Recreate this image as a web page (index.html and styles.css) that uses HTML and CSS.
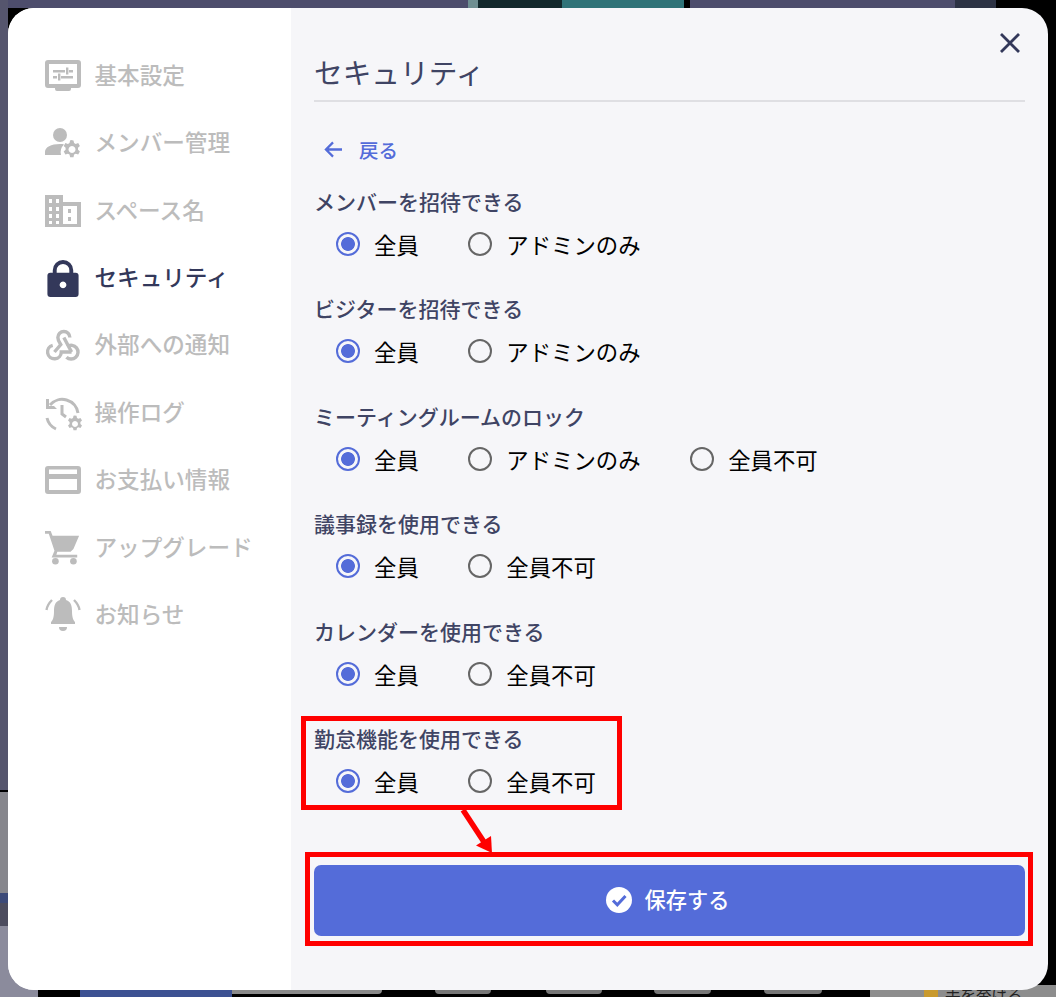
FILE: index.html
```html
<!DOCTYPE html>
<html lang="ja">
<head>
<meta charset="utf-8">
<title>セキュリティ</title>
<link rel="stylesheet" href="styles.css">
</head>
<body>
<div class="backdrop">
  <div class="bg bg-top-a"></div><div class="bg bg-top-a2"></div><div class="bg bg-top-b"></div><div class="bg bg-top-c"></div><div class="bg bg-top-d"></div><div class="bg bg-top-e"></div>
  <div class="bg bg-left"></div><div class="bg bg-left-2"></div><div class="bg bg-left-3"></div><div class="bg bg-left-4"></div><div class="bg bg-left-low"></div>
  <div class="bg bg-bottom-a"></div><div class="bg bg-bottom-b"></div>
  <div class="bg hump hump-1"></div><div class="bg hump hump-2"></div><div class="bg hump hump-3"></div><div class="bg hump hump-4"></div>
  <div class="bg bg-right-low"></div><div class="bg bg-hand"></div>
  <span class="bg bg-hint">手を挙げる</span>
</div>
<main class="modal">
  <nav class="side">
    <a class="nav-item"><svg class="nav-icon" viewBox="0 0 36 32"><path fill-rule="evenodd" d="M3 0h30a3 3 0 0 1 3 3v22a3 3 0 0 1-3 3h-7v1a2 2 0 0 1-2 2H12a2 2 0 0 1-2-2v-1H3a3 3 0 0 1-3-3V3a3 3 0 0 1 3-3zm1 4v20h28V4z"/><path d="M8 10h12v2.400H8zM24 10h4v2.400h-4zM21 7.500h2.400v7H21zM16 16h12v2.400H16zM8 16h4v2.400H8zM13 13.500h2.400v7H13z"/></svg><span>基本設定</span></a>
    <a class="nav-item"><svg class="nav-icon" viewBox="0 0 36 32"><circle cx="15" cy="8" r="7"/><path d="M0 28v-3c0-5 6-8 15-8 2 0 3 .2 4 .4A11 11 0 0 0 16 28z"/><path fill-rule="evenodd" d="M26 13l2.500.4.600 2.600 1.600.9 2.500-.8 1.700 2.900-1.900 1.800v2l1.900 1.800-1.700 2.900-2.500-.8-1.600.9-.6 2.600h-3.400l-.6-2.600-1.600-.9-2.500.8-1.700-2.900 1.900-1.800v-2l-1.900-1.800 1.700-2.900 2.500.8 1.600-.9.600-2.600zm1 6a3.500 3.500 0 1 0 .01 0z"/></svg><span>メンバー管理</span></a>
    <a class="nav-item"><svg class="nav-icon" viewBox="0 0 36 32"><path fill-rule="evenodd" d="M0 0h18v7h18v25H0zM4 4v4h3V4zM11 4v4h3V4zM4 12v4h3v-4zM11 12v4h3v-4zM4 19v4h3v-4zM11 19v4h3v-4zM4 26v3h3v-3zM11 26v3h3v-3zM18 11v18h14V11zM23 14v4h3v-4zM23 22v4h3v-4z"/></svg><span>スペース名</span></a>
    <a class="nav-item active"><svg class="nav-icon" viewBox="0 0 36 38"><path fill-rule="evenodd" d="M18 0a10.500 10.500 0 0 1 10.500 10.500V13H31a3 3 0 0 1 3 3v19a3 3 0 0 1-3 3H5a3 3 0 0 1-3-3V16a3 3 0 0 1 3-3h2.500v-2.500A10.500 10.500 0 0 1 18 0zm0 4a6.500 6.500 0 0 0-6.500 6.500V13h13v-2.500A6.500 6.500 0 0 0 18 4zm0 18a3.500 3.500 0 1 0 .01 0z"/></svg><span>セキュリティ</span></a>
    <a class="nav-item"><svg class="nav-icon nav-icon-tall" viewBox="1.500 2 21 21"><g class="ln" stroke-width="2"><path d="M6 12.100A4 4 0 1 0 11 16h6"/><path d="M16 7.500a3.500 3.500 0 0 0-7 0c0 1.500.900 2.800 1.700 4.200L7 16"/><path d="M12.500 7.500L17 16"/><path d="M14.500 12.800A4 4 0 1 1 14 19"/></g></svg><span>外部への通知</span></a>
    <a class="nav-item"><svg class="nav-icon nav-icon-wide" viewBox="0 0 40 38"><g class="ln" stroke-width="3"><path d="M5 11A16 16 0 0 1 33 19"/><path d="M2 24A16 16 0 0 0 11 35"/><path d="M17 11v9l4 3"/></g><path d="M1 5v10h11l-3-3H4V5z"/><path transform="translate(.5 2.500)" fill-rule="evenodd" d="M29 19l2 .3.500 2.200 1.400.8 2.100-.7 1.500 2.500-1.600 1.500v1.800l1.600 1.500-1.500 2.500-2.100-.7-1.400.8-.5 2.200h-3l-.5-2.200-1.400-.8-2.100.7-1.500-2.500 1.600-1.500v-1.800l-1.600-1.500 1.500-2.500 2.100.7 1.400-.8.500-2.200zm.5 5.500a3 3 0 1 0 .01 0z"/></svg><span>操作ログ</span></a>
    <a class="nav-item"><svg class="nav-icon" viewBox="0 0 36 30"><path fill-rule="evenodd" d="M3 1h30a3 3 0 0 1 3 3v22a3 3 0 0 1-3 3H3a3 3 0 0 1-3-3V4a3 3 0 0 1 3-3zm1 3.500V9h28V4.500zM4 14v11h28V14z"/></svg><span>お支払い情報</span></a>
    <a class="nav-item"><svg class="nav-icon nav-icon-tall" viewBox="0 0 38 36"><path d="M0 0h6l2 5h28l-6 14-3 3H13l-1 3h22v3H7l3-7L4 3H0z"/><circle cx="11" cy="32" r="3.500"/><circle cx="30" cy="32" r="3.500"/></svg><span>アップグレード</span></a>
    <a class="nav-item"><svg class="nav-icon nav-icon-tall" viewBox="0 0 36 36"><path d="M18 0a3 3 0 0 1 3 3c5 1.500 6 6 6 11 0 6 1 9 3 11v2H6v-2c2-2 3-5 3-11 0-5 1-9.500 6-11a3 3 0 0 1 3-3z"/><path d="M14 30h8a4 4 0 0 1-8 0z"/><g class="ln" stroke-width="2.400"><path d="M7 3C4 6 2 9 1.500 13M29 3c3 3 5 6 5.500 10"/></g></svg><span>お知らせ</span></a>
  </nav>
  <section class="content">
    <button class="close" aria-label="閉じる"><svg viewBox="0 0 20 20"><path d="M1 1l18 18M19 1L1 19"/></svg></button>
    <h1 class="title">セキュリティ</h1>
    <a class="back"><svg viewBox="0 0 20 18"><path d="M19 9H2M9.500 1.500L2 9l7.500 7.500"/></svg><span>戻る</span></a>
    <div class="groups">
      <fieldset class="group"><legend class="group-label">メンバーを招待できる</legend>
        <div class="options"><label class="opt on"><i class="radio"></i>全員</label><label class="opt"><i class="radio"></i>アドミンのみ</label></div></fieldset>
      <fieldset class="group"><legend class="group-label">ビジターを招待できる</legend>
        <div class="options"><label class="opt on"><i class="radio"></i>全員</label><label class="opt"><i class="radio"></i>アドミンのみ</label></div></fieldset>
      <fieldset class="group"><legend class="group-label">ミーティングルームのロック</legend>
        <div class="options"><label class="opt on"><i class="radio"></i>全員</label><label class="opt"><i class="radio"></i>アドミンのみ</label><label class="opt"><i class="radio"></i>全員不可</label></div></fieldset>
      <fieldset class="group"><legend class="group-label">議事録を使用できる</legend>
        <div class="options"><label class="opt on"><i class="radio"></i>全員</label><label class="opt"><i class="radio"></i>全員不可</label></div></fieldset>
      <fieldset class="group"><legend class="group-label">カレンダーを使用できる</legend>
        <div class="options"><label class="opt on"><i class="radio"></i>全員</label><label class="opt"><i class="radio"></i>全員不可</label></div></fieldset>
      <fieldset class="group"><legend class="group-label">勤怠機能を使用できる</legend>
        <div class="options"><label class="opt on"><i class="radio"></i>全員</label><label class="opt"><i class="radio"></i>全員不可</label></div></fieldset>
    </div>
    <button class="save"><svg viewBox="0 0 26 26"><circle cx="13" cy="13" r="13" fill="#fff"/><path d="M7 13.500l4.300 4.300L19.500 9" fill="none" stroke="#546cd9" stroke-width="3"/></svg><span>保存する</span></button>
  </section>
</main>
<div class="mark mark-a"></div>
<div class="mark mark-b"></div>
<svg class="mark-arrow" viewBox="0 0 44 52"><path d="M4 2l23 35" stroke="#f00" stroke-width="5.500" fill="none"/><path d="M17 37.500L32 28l1 17z" fill="#f00"/></svg>
</body>
</html>
```
FILE: styles.css
```css
* { box-sizing: border-box; }
html, body { margin: 0; height: 100%; }
body {
  width: 1056px; height: 997px; padding: 8px 8px 7px;
  background: #000; overflow: hidden; position: relative;
  font-family: Inter, "Noto Sans CJK JP", sans-serif;
}
.backdrop { position: absolute; inset: 0; overflow: hidden; }
.bg { position: absolute; }
.bg-top-a { left: 0; top: 0; width: 468px; height: 8px; background: #4d4d6c; }
.bg-top-a2 { left: 468px; top: 0; width: 10px; height: 8px; background: #6f8f92; }
.bg-top-b { left: 478px; top: 0; width: 84px; height: 8px; background: #12282c; }
.bg-top-c { left: 562px; top: 0; width: 122px; height: 8px; background: #2f7378; }
.bg-top-d { left: 690px; top: 0; width: 265px; height: 8px; background: #4d4d6c; }
.bg-top-e { left: 955px; top: 0; width: 41px; height: 8px; background: #2c3244; }
.bg-left { left: 0; top: 0; width: 8px; height: 790px; background: #55556d; }
.bg-left-2 { left: 0; top: 792px; width: 8px; height: 101px; background: #86868c; }
.bg-left-3 { left: 0; top: 893px; width: 8px; height: 10px; background: #3c4a78; }
.bg-left-4 { left: 0; top: 903px; width: 8px; height: 23px; background: #4c4c5e; }
.bg-left-low { left: 0; top: 926px; width: 38px; height: 71px; background: #8b8b9c; }
.bg-bottom-a { left: 80px; top: 990px; width: 152px; height: 7px; background: #3c5192; }
.bg-bottom-b { left: 232px; top: 990px; width: 150px; height: 4px; background: #8a8a8a; border-radius: 0 0 8px 0; }
.hump { top: 990px; height: 4px; background: #777; border-radius: 0 0 10px 10px; }
.hump-1 { left: 435px; width: 56px; }
.hump-2 { left: 546px; width: 56px; }
.hump-3 { left: 654px; width: 57px; }
.hump-4 { left: 764px; width: 58px; }
.bg-right-low { left: 870px; top: 985px; width: 186px; height: 12px; background: #8d8d8d; }
.bg-hand { left: 924px; top: 990px; width: 14px; height: 7px; background: #c99a2e; }
.bg-hint { left: 945px; top: 986px; font-size: 15.500px; line-height: 20px; color: #222; white-space: nowrap; }

.modal {
  position: relative; display: flex; width: 1040px; height: 982px;
  border-radius: 26px; overflow: hidden; background: #f6f6f9;
}
.side {
  flex: 0 0 283px; background: #fff; padding: 34.400px 0 0 37px;
  display: flex; flex-direction: column;
}
.nav-item {
  display: flex; align-items: center; height: 67.4px; gap: 13.500px;
  font-size: 22.600px; font-weight: 500; color: #bcbcbc; white-space: nowrap;
}
.nav-item.active { color: #33385a; }
.nav-icon { width: 36px; height: 32px; flex: none; fill: currentColor; overflow: visible; }
.nav-icon .ln { fill: none; stroke: currentColor; }
.nav-icon-tall { height: 36px; }
.nav-icon-wide { width: 40px; height: 38px; margin-right: -4px; }
.nav-item.active .nav-icon { height: 37px; }
.nav-item span { line-height: 1; }

.content { flex: 1; position: relative; display: flex; flex-direction: column; padding: 46px 23px 0; }
.close {
  position: absolute; top: 25px; right: 28px; width: 20px; height: 20px;
  padding: 0; border: 0; background: none;
}
.close svg { display: block; width: 20px; height: 20px; fill: none; stroke: #33385a; stroke-width: 2.8; }
.title {
  margin: 0; height: 48px; padding: 0; font-size: 28.700px; line-height: 40px;
  font-weight: 400; color: #3f4464; border-bottom: 2px solid #dfdfe3;
}
.back {
  display: flex; align-items: center; gap: 16px; height: 24px; margin: 35px 0 0 10px;
  font-size: 19.500px; font-weight: 500; color: #546cd9;
}
.back svg { width: 19px; height: 17px; fill: none; stroke: #546cd9; stroke-width: 2.400; }
.groups { display: flex; flex-direction: column; margin-top: 28px; }
.group { margin: 0; padding: 0; border: 0; height: 107.400px; min-width: 0; }
.group-label {
  padding: 0; height: 28px; font-size: 21px; line-height: 28px;
  font-weight: 500; color: #3f4464; white-space: nowrap;
}
.options { display: flex; gap: 49px; margin: 13px 0 0 21.500px; height: 28px; align-items: center; }
.opt { display: flex; align-items: center; gap: 14.500px; font-size: 22.400px; color: #000; white-space: nowrap; }
.radio {
  width: 24px; height: 24px; border-radius: 50%; border: 2.400px solid #666;
  background: #f6f6f9; flex: none;
}
.on .radio { border-color: #546cd9; background: radial-gradient(circle, #546cd9 0 6.500px, transparent 7.300px); }
.save {
  position: absolute; left: 23px; top: 857px; width: 711px; height: 71px;
  display: flex; align-items: center; justify-content: center; gap: 13px;
  padding: 0 4px 2px 0;
  border: 0; border-radius: 7px; background: #546cd9; color: #fff;
  font: 500 21.200px/30px Inter, "Noto Sans CJK JP", sans-serif;
}
.save svg { width: 26px; height: 26px; }
.mark { position: absolute; border: 5.500px solid #f00; pointer-events: none; }
.mark-a { left: 301px; top: 716px; width: 321px; height: 94px; }
.mark-b { left: 305px; top: 852px; width: 728px; height: 94px; }
.mark-arrow { position: absolute; left: 459px; top: 808px; width: 44px; height: 52px; }
```
